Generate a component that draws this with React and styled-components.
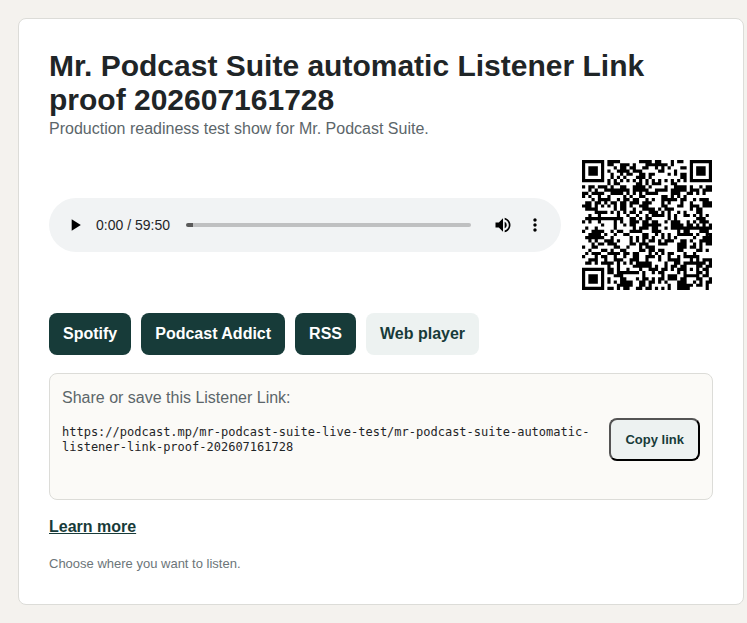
import { useState } from 'react';
import styled, { createGlobalStyle } from 'styled-components';
import { MdMoreVert, MdPause, MdPlayArrow, MdVolumeOff, MdVolumeUp } from 'react-icons/md';

const show = {
  title: 'Mr. Podcast Suite automatic Listener Link proof 202607161728',
  description: 'Production readiness test show for Mr. Podcast Suite.',
  link: 'https://podcast.mp/mr-podcast-suite-live-test/mr-podcast-suite-automatic-listener-link-proof-202607161728',
  duration: 3590,
};

const players = [
  { name: 'Spotify', href: '#spotify' },
  { name: 'Podcast Addict', href: '#podcast-addict' },
  { name: 'RSS', href: '#rss' },
  { name: 'Web player', href: '#web', quiet: true },
];

// QR code, version 6, error correction level M, mask 3
const QR_SIZE = 41;
const QR_BLOCKS = 4;
const QR_DATA = 27;
const QR_ECC = 16;
const QR_MASK = 3;

const multiply = (x, y) => {
  let z = 0;
  for (let i = 7; i >= 0; i--) {
    z = (z << 1) ^ ((z >>> 7) * 0x11d);
    z ^= ((y >>> i) & 1) * x;
  }
  return z;
};

const getDivisor = () => {
  const result = Array(QR_ECC).fill(0);
  result[QR_ECC - 1] = 1;
  let root = 1;
  for (let i = 0; i < QR_ECC; i++) {
    for (let j = 0; j < QR_ECC; j++) {
      result[j] = multiply(result[j], root);
      if (j + 1 < QR_ECC) result[j] ^= result[j + 1];
    }
    root = multiply(root, 2);
  }
  return result;
};

const getCodewords = (text) => {
  const bytes = [...new TextEncoder().encode(text)];
  let bits = '0100' + bytes.length.toString(2).padStart(8, '0');
  bits += bytes.map((b) => b.toString(2).padStart(8, '0')).join('') + '0000';
  const data = bits.match(/.{8}/g).map((b) => parseInt(b, 2));
  for (let pad = 0xec; data.length < QR_BLOCKS * QR_DATA; pad ^= 0xec ^ 0x11) data.push(pad);

  const divisor = getDivisor();
  const blocks = [];
  for (let i = 0; i < QR_BLOCKS; i++) {
    const block = data.slice(i * QR_DATA, (i + 1) * QR_DATA);
    const ecc = Array(QR_ECC).fill(0);
    block.forEach((b) => {
      const factor = b ^ ecc.shift();
      ecc.push(0);
      divisor.forEach((d, j) => {
        ecc[j] ^= multiply(d, factor);
      });
    });
    blocks.push([...block, ...ecc]);
  }

  const result = [];
  for (let i = 0; i < QR_DATA + QR_ECC; i++) {
    blocks.forEach((block) => result.push(block[i]));
  }
  return result;
};

const buildQr = (text) => {
  const grid = Array.from({ length: QR_SIZE }, () => Array(QR_SIZE).fill(null));
  const last = QR_SIZE - 1;

  const square = (row, col, radius) => {
    for (let r = -radius; r <= radius; r++) {
      for (let c = -radius; c <= radius; c++) {
        if (grid[row + r]?.[col + c] === undefined) continue;
        const d = Math.max(Math.abs(r), Math.abs(c));
        grid[row + r][col + c] = radius === 4 ? d !== 2 && d !== 4 : d !== 1;
      }
    }
  };

  for (let i = 0; i < QR_SIZE; i++) {
    grid[6][i] = i % 2 === 0;
    grid[i][6] = i % 2 === 0;
  }
  square(3, 3, 4);
  square(3, last - 3, 4);
  square(last - 3, 3, 4);
  square(34, 34, 2);

  // level M is 00, so the format data is the mask number alone
  let rem = QR_MASK;
  for (let i = 0; i < 10; i++) rem = (rem << 1) ^ ((rem >>> 9) * 0x537);
  const format = ((QR_MASK << 10) | rem) ^ 0x5412;
  const bit = (i) => ((format >>> i) & 1) === 1;
  for (let i = 0; i <= 5; i++) grid[i][8] = bit(i);
  grid[7][8] = bit(6);
  grid[8][8] = bit(7);
  grid[8][7] = bit(8);
  for (let i = 9; i < 15; i++) grid[8][14 - i] = bit(i);
  for (let i = 0; i < 8; i++) grid[8][last - i] = bit(i);
  for (let i = 8; i < 15; i++) grid[QR_SIZE - 15 + i][8] = bit(i);
  grid[QR_SIZE - 8][8] = true;

  // the data runs in columns of two, up and down from the right edge
  const codewords = getCodewords(text);
  let n = 0;
  for (let right = last; right >= 1; right -= 2) {
    if (right === 6) right = 5;
    const up = ((right + 1) & 2) === 0;
    for (let v = 0; v < QR_SIZE; v++) {
      for (let j = 0; j < 2; j++) {
        const c = right - j;
        const r = up ? last - v : v;
        if (grid[r][c] !== null) continue;
        const dark = (((codewords[n >>> 3] ?? 0) >>> (7 - (n & 7))) & 1) === 1;
        grid[r][c] = dark !== ((r + c) % 3 === 0);
        n++;
      }
    }
  }
  return grid;
};

const QrCode = ({ value }) => {
  const path = buildQr(value)
    .map((row, r) => row.map((dark, c) => (dark ? `M${c} ${r}h1v1h-1z` : '')).join(''))
    .join('');

  return (
    <Qr viewBox={`0 0 ${QR_SIZE} ${QR_SIZE}`} role="img" aria-label="QR code">
      <path d={path} />
    </Qr>
  );
};

const formatTime = (seconds) => {
  return `${Math.floor(seconds / 60)}:${String(seconds % 60).padStart(2, '0')}`;
};

const Player = ({ duration }) => {
  const [playing, setPlaying] = useState(false);
  const [muted, setMuted] = useState(false);
  const [time, setTime] = useState(0);

  return (
    <Audio>
      <IconButton aria-label={playing ? 'Pause' : 'Play'} onClick={() => setPlaying(!playing)}>
        {playing ? <MdPause size={20} /> : <MdPlayArrow size={20} />}
      </IconButton>
      <Time>{formatTime(time)} / {formatTime(duration)}</Time>
      <Seek
        type="range"
        aria-label="Seek"
        min="0"
        max={duration}
        value={time}
        style={{ '--played': `${(time / duration) * 100}%` }}
        onChange={(e) => setTime(Number(e.target.value))}
      />
      <IconButton aria-label={muted ? 'Unmute' : 'Mute'} onClick={() => setMuted(!muted)}>
        {muted ? <MdVolumeOff size={20} /> : <MdVolumeUp size={20} />}
      </IconButton>
      <IconButton aria-label="More options">
        <MdMoreVert size={20} />
      </IconButton>
    </Audio>
  );
};

const App = () => {
  const [status, setStatus] = useState('');

  const handleCopy = () => {
    navigator.clipboard
      ?.writeText(show.link)
      .then(() => setStatus('Copied.'))
      .catch(() => setStatus('Could not copy the link.'));
  };

  return (
    <>
      <GlobalStyle />
      <Page>
        <Card>
          <Title>{show.title}</Title>
          <Description>{show.description}</Description>
          <Listen>
            <Player duration={show.duration} />
            <QrCode value={show.link} />
          </Listen>
          <Players>
            {players.map((player) => (
              <PlayerLink key={player.name} href={player.href} $quiet={player.quiet}>
                {player.name}
              </PlayerLink>
            ))}
          </Players>
          <Share>
            <ShareLabel>Share or save this Listener Link:</ShareLabel>
            <ShareRow>
              <Code>{show.link}</Code>
              <CopyButton onClick={handleCopy}>Copy link</CopyButton>
            </ShareRow>
            <Status aria-live="polite">{status}</Status>
          </Share>
          <More href="#learn-more">Learn more</More>
          <Note>Choose where you want to listen.</Note>
        </Card>
      </Page>
    </>
  );
};

const GlobalStyle = createGlobalStyle`
  * {
    box-sizing: border-box;
  }

  body {
    margin: 0;
    background-color: #f4f2ee;
    color: #1f2527;
    font-family: Arial, "Liberation Sans", sans-serif;
    font-size: 16px;
    line-height: 24px;
  }
`

const Page = styled.main`
  padding: 18px 3px 18px 18px;
`

const Card = styled.section`
  padding: 30px;
  background-color: #fff;
  border: 1px solid #dcdcd8;
  border-radius: 8px;
`

const Title = styled.h1`
  margin: 0;
  font-size: 30px;
  line-height: 34px;
`

const Description = styled.p`
  margin: 0;
  color: #5c666a;
`

const Listen = styled.div`
  display: grid;
  grid-template-columns: minmax(0, 1fr) 132px;
  gap: 20px;
  align-items: center;
  margin-top: 18px;
`

const Audio = styled.div`
  display: flex;
  align-items: center;
  height: 54px;
  padding: 0 10px;
  background-color: #f1f3f4;
  border-radius: 27px;
`

const IconButton = styled.button`
  display: grid;
  place-items: center;
  flex: none;
  width: 32px;
  height: 32px;
  padding: 0;
  border: none;
  background: none;
  color: #000;
  cursor: pointer;
`

const Time = styled.span`
  margin-left: 5px;
  font-size: 14px;
  white-space: nowrap;
`

const Seek = styled.input`
  flex: 1;
  min-width: 0;
  height: 4px;
  margin: 0 16px;
  appearance: none;
  border-radius: 2px;
  background: linear-gradient(#5a5a5a, #5a5a5a) 0 0 / max(7px, var(--played)) 100% no-repeat #bfc0c1;
  cursor: pointer;

  &::-webkit-slider-thumb {
    appearance: none;
    width: 12px;
    height: 12px;
    border-radius: 50%;
    background-color: transparent;
  }
`

const Qr = styled.svg`
  display: block;
  width: 100%;
  padding: 1px;
`

const Players = styled.div`
  display: flex;
  flex-wrap: wrap;
  gap: 10px;
  margin-top: 22px;
`

const PlayerLink = styled.a`
  padding: 9px 14px;
  border-radius: 8px;
  background-color: ${(props) => (props.$quiet ? '#edf2f1' : '#173b39')};
  color: ${(props) => (props.$quiet ? '#173b39' : '#fff')};
  font-weight: bold;
  text-decoration: none;
`

const Share = styled.div`
  display: grid;
  gap: 8px;
  margin-top: 18px;
  padding: 12px;
  background-color: #fbfaf7;
  border: 1px solid #dcdcd8;
  border-radius: 8px;
`

const ShareLabel = styled.span`
  color: #5c666a;
`

const ShareRow = styled.div`
  display: flex;
  align-items: center;
  justify-content: space-between;
  gap: 10px;
`

const Code = styled.code`
  font-family: "DejaVu Sans Mono", monospace;
  font-size: 12px;
  line-height: 15px;
  overflow-wrap: anywhere;
`

const CopyButton = styled.button`
  flex: none;
  padding: 12px 14px;
  border: 2px outset #000;
  border-radius: 8px;
  background-color: #edf2f1;
  color: #173b39;
  font-family: inherit;
  font-size: 13px;
  font-weight: bold;
  line-height: 15px;
  cursor: pointer;
`

const Status = styled.span`
  min-height: 18px;
  font-size: 13px;
  line-height: 18px;
`

const More = styled.a`
  display: table;
  margin-top: 15px;
  color: #173b39;
  font-weight: bold;
`

const Note = styled.p`
  margin: 15px 0 0;
  color: #6c7579;
  font-size: 13px;
  line-height: 20px;
`

export default App;
